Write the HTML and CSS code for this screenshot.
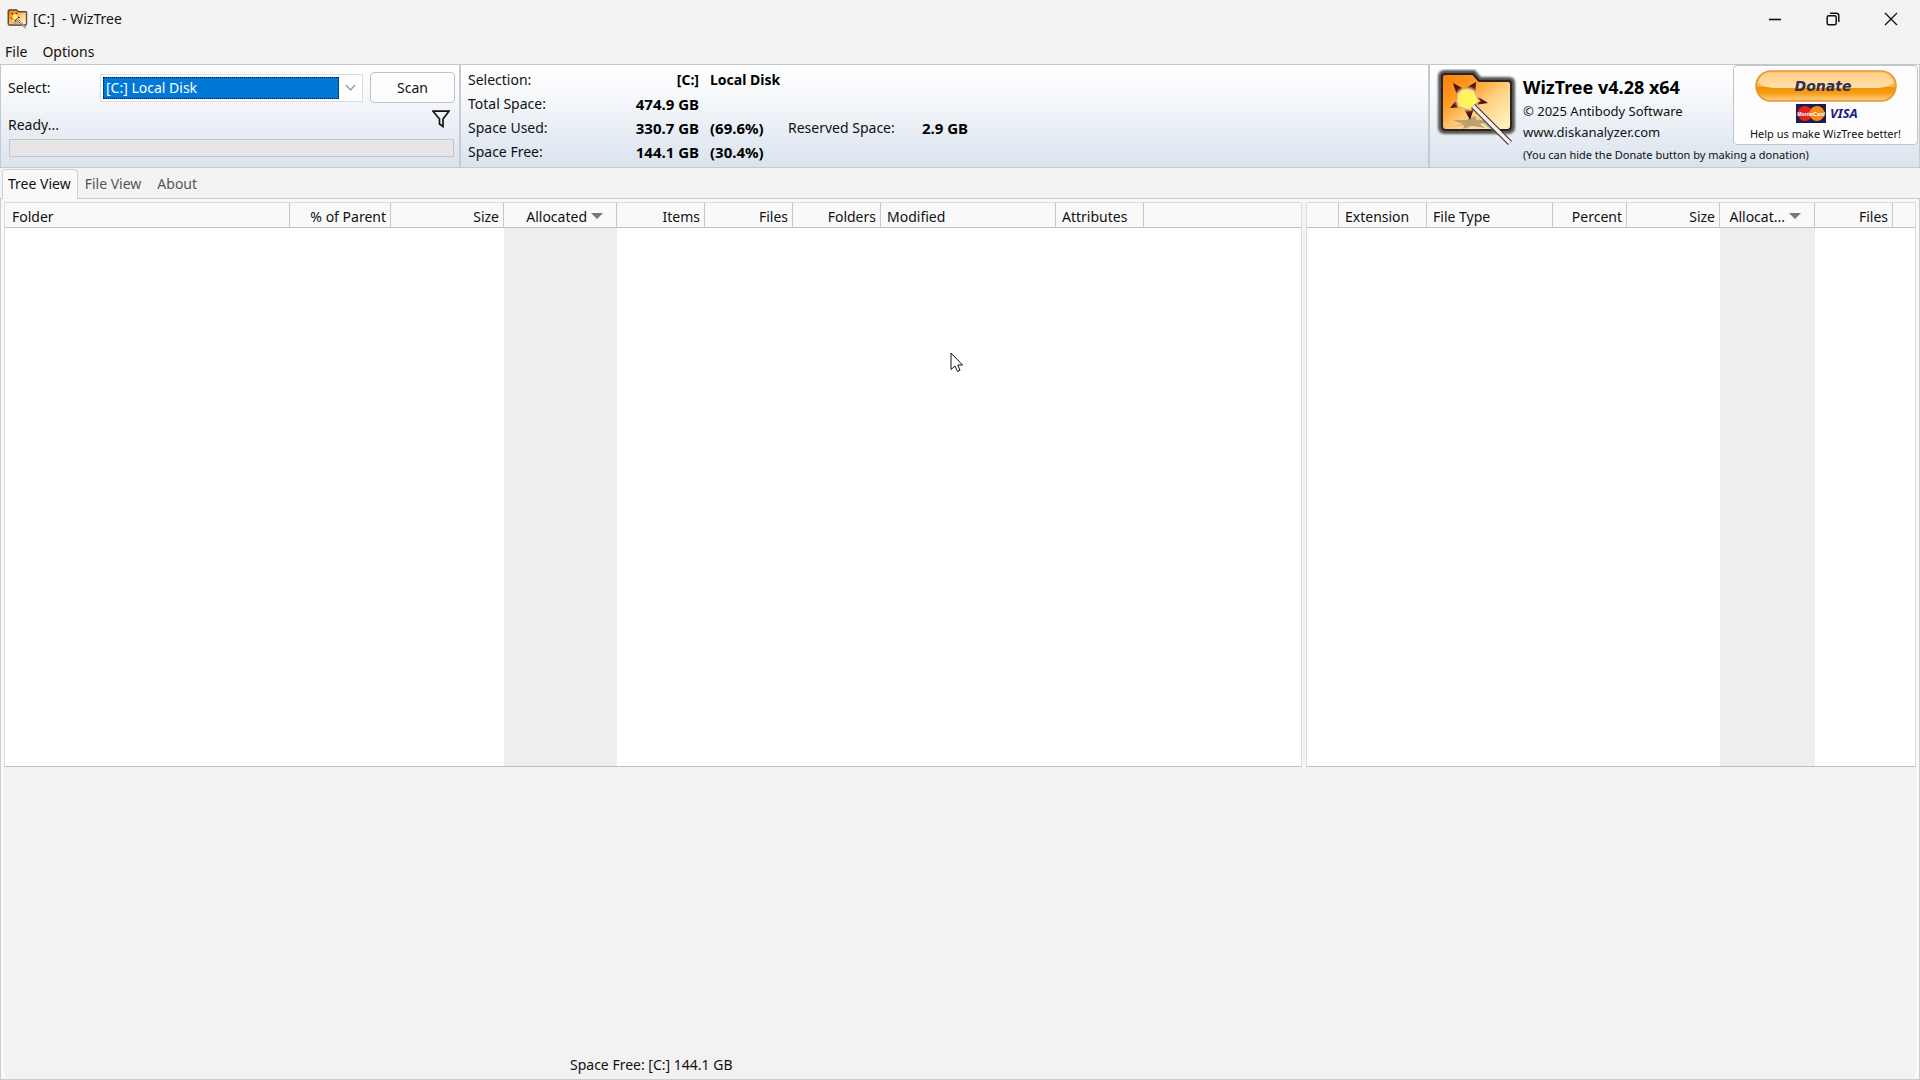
FILE: index.html
```html
<!DOCTYPE html>
<html lang="en">
<head>
<meta charset="utf-8">
<title>[C:] - WizTree</title>
<link rel="stylesheet" href="styles.css">
</head>
<body>
<svg class="defs" aria-hidden="true">
  <defs>
    <linearGradient id="folderFill" x1="0" y1="0" x2="1" y2="1">
      <stop offset="0" stop-color="#ff7d08"/><stop offset=".3" stop-color="#ff9a22"/>
      <stop offset=".58" stop-color="#ffd083"/><stop offset=".9" stop-color="#fff0bd"/>
    </linearGradient>
    <radialGradient id="starFill" gradientUnits="userSpaceOnUse" cx="31" cy="30" r="18">
      <stop offset="0" stop-color="#fff64a"/><stop offset=".5" stop-color="#fff080"/>
      <stop offset=".62" stop-color="#d09078"/><stop offset=".74" stop-color="#5c1c1c"/><stop offset="1" stop-color="#3a0c10"/>
    </radialGradient>
    <filter id="soft" x="-20%" y="-20%" width="140%" height="140%"><feGaussianBlur stdDeviation="1.3"/></filter>
    <linearGradient id="pill" x1="0" y1="0" x2="0" y2="1">
      <stop offset="0" stop-color="#ffc66c"/><stop offset=".54" stop-color="#ffb13c"/>
      <stop offset=".55" stop-color="#f39200"/><stop offset=".72" stop-color="#f69b10"/><stop offset="1" stop-color="#ffd28a"/>
    </linearGradient>
    <linearGradient id="shine" x1="0" y1="0" x2="0" y2="1">
      <stop offset="0" stop-color="#ffcf85"/><stop offset="1" stop-color="#ffe0ae"/>
    </linearGradient>
    <symbol id="folder" viewBox="0 0 82 78">
      <path d="M9 3H38L44 10H73Q77 10 77 14V58Q77 63 72 63H9Q4 63 4 58V8Q4 3 9 3Z" fill="#555" stroke="#555" stroke-width="4" filter="url(#soft)"/>
      <path d="M9 5H37L43 12H72Q75 12 75 15V57Q75 61 71 61H10Q6 61 6 57V8Q6 5 9 5Z" fill="url(#folderFill)" stroke="#2b2520" stroke-width="2"/>
      <path d="M15 58l12-3-10-4 13 0 9-4 2 4 12 1-9 3 5 4-13-2-9 3 1-4z" fill="#a08c62" opacity=".7"/>
      <path d="M40 48L55 57 70 71 58 64Z" fill="#777" opacity=".4"/>
      <path d="M17 14L28 20 40 13 39 26 52 34 39 36 34 51 27 38 14 39 22 29Z" fill="url(#starFill)"/>
      <path d="M26 19l5 6 7-4-1 7 8 4-8 3-2 7-6-6-8 2 4-7-4-7 6 2z" fill="#fff45a" opacity=".9"/>
      <path d="M37 37L74 74" stroke="#4a3030" stroke-width="5.600"/>
      <path d="M37 37L74 74" stroke="#f8f4f4" stroke-width="3.400"/>
    </symbol>
  </defs>
</svg>

<header class="titlebar">
  <svg class="app-icon"><use href="#folder"/></svg>
  <h1 class="title">[C:]&nbsp; - WizTree</h1>
  <div class="window-buttons">
    <button class="window-button" aria-label="Minimize"><svg width="14" height="14" viewBox="0 0 14 14"><path d="M1 7.5H13" stroke="#111" stroke-width="1.6"/></svg></button>
    <button class="window-button" aria-label="Restore"><svg width="14" height="14" viewBox="0 0 14 14" fill="none" stroke="#111" stroke-width="1.5"><rect x="1.2" y="3.7" width="9" height="9" rx="1.5"/><path d="M4 1.2H10.5Q12.8 1.2 12.8 3.5V10"/></svg></button>
    <button class="window-button" aria-label="Close"><svg width="14" height="14" viewBox="0 0 14 14"><path d="M1 1L13 13M13 1L1 13" stroke="#111" stroke-width="1.3"/></svg></button>
  </div>
</header>

<nav class="menubar">
  <button class="menu">File</button>
  <button class="menu">Options</button>
</nav>

<section class="toolbar">
  <form class="panel scan-panel">
    <div class="drive-row">
      <label class="drive-label" for="drive">Select:</label>
      <div class="combo">
        <select id="drive" class="combo-select"><option>[C:] Local Disk</option></select>
        <svg class="combo-arrow" width="23" height="12" viewBox="0 0 23 12"><path d="M7 3L11.500 8 16 3" fill="none" stroke="#999" stroke-width="1.4"/></svg>
      </div>
      <button class="scan" type="button">Scan</button>
    </div>
    <div class="status-row">
      <label for="scan-progress">Ready...</label>
      <button class="filter" type="button" aria-label="Filter"><svg width="18" height="18" viewBox="0 0 18 18"><path d="M1 1.200H17L11 9V16.500L7.500 14V9Z" fill="none" stroke="#111" stroke-width="1.700"/></svg></button>
    </div>
    <progress id="scan-progress" class="progress" value="0" max="100"></progress>
  </form>

  <div class="panel info-panel">
    <dl class="info">
      <dt>Selection:</dt><dd>[C:]</dd><dd class="left">Local Disk</dd>
      <dt>Total Space:</dt><dd class="figure">474.9 GB</dd>
      <dt>Space Used:</dt><dd class="figure">330.7 GB</dd><dd class="left figure">(69.6%)</dd><dt class="reserved">Reserved Space:</dt><dd class="figure">2.9 GB</dd>
      <dt>Space Free:</dt><dd class="figure">144.1 GB</dd><dd class="left figure">(30.4%)</dd>
    </dl>
  </div>

  <div class="panel about-panel">
    <svg class="logo"><use href="#folder"/></svg>
    <div class="about">
      <strong class="product">WizTree v4.28 x64</strong>
      <span class="credit">© 2025 Antibody Software</span>
      <a class="site" href="#">www.diskanalyzer.com</a>
      <small class="hint">(You can hide the Donate button by making a donation)</small>
    </div>
    <button class="donate">
      <svg width="142" height="54" viewBox="0 0 142 54">
        <rect x="1" y="1" width="140" height="30" rx="15" fill="url(#pill)" stroke="#e9943a" stroke-width="1.500"/>
        <path d="M15 3H127Q137 4 139 13Q132 18 120 18H22Q10 18 3 13Q5 4 15 3Z" fill="url(#shine)"/>
        <text class="donate-text" x="68" y="21" text-anchor="middle">Donate</text>
        <rect x="41" y="34" width="30" height="19" fill="#1d1c55"/>
        <circle cx="50" cy="43.500" r="7.500" fill="#e2231a"/><circle cx="62" cy="43.500" r="7.500" fill="#f58a1c"/>
        <text class="master-text" x="56" y="46" text-anchor="middle">MasterCard</text>
        <text class="visa-text" x="75" y="48">VISA</text>
      </svg>
      <span>Help us make WizTree better!</span>
    </button>
  </div>
</section>

<nav class="tabs" role="tablist">
  <button class="tab active" role="tab" aria-selected="true">Tree View</button>
  <button class="tab" role="tab">File View</button>
  <button class="tab" role="tab">About</button>
</nav>

<main class="workspace">
  <div class="lists">
    <div class="pane tree-pane">
      <table class="list">
        <colgroup><col class="w-folder"><col class="w-parent"><col class="w-treesize"><col class="w-alloc"><col class="w-count"><col class="w-count"><col class="w-count"><col class="w-modified"><col class="w-count"><col></colgroup>
        <thead><tr><th>Folder</th><th class="num">% of Parent</th><th class="num">Size</th><th class="num sort">Allocated<i class="arrow"></i></th><th class="num">Items</th><th class="num">Files</th><th class="num">Folders</th><th>Modified</th><th>Attributes</th><th></th></tr></thead>
        <tbody><tr><td></td><td></td><td></td><td class="sorted"></td><td></td><td></td><td></td><td></td><td></td><td></td></tr></tbody>
      </table>
    </div>
    <div class="pane types-pane">
      <table class="list">
        <colgroup><col class="w-icon"><col class="w-count"><col class="w-type"><col class="w-percent"><col class="w-size"><col class="w-typealloc"><col class="w-files"><col></colgroup>
        <thead><tr><th></th><th>Extension</th><th>File Type</th><th class="num">Percent</th><th class="num">Size</th><th class="num sort">Allocat...<i class="arrow"></i></th><th class="num">Files</th><th></th></tr></thead>
        <tbody><tr><td></td><td></td><td></td><td></td><td></td><td class="sorted"></td><td></td><td></td></tr></tbody>
      </table>
    </div>
  </div>
  <div class="treemap"><p class="free">Space Free: [C:] 144.1 GB</p></div>
</main>

<svg class="pointer" width="14" height="21" viewBox="0 0 14 21"><path d="M1 1V17.500L5 14 7.500 19.500 10 18.300 7.800 13H12.500Z" fill="#fff" stroke="#111" stroke-width="1"/></svg>
</body>
</html>
```
FILE: styles.css
```css
* { box-sizing: border-box; }

body {
  margin: 0;
  height: 100vh;
  display: flex;
  flex-direction: column;
  position: relative;
  overflow: hidden;
  background: #f3f3f3;
  color: #111;
  font: 14px/20px "Noto Sans", "Open Sans", sans-serif;
}

button, select {
  font: inherit;
  color: inherit;
  border: 0;
  background: none;
  padding: 0;
  margin: 0;
}

.defs { position: absolute; width: 0; height: 0; }

/* Title bar and menu */
.titlebar { display: flex; align-items: center; height: 38px; padding-left: 7px; }
.app-icon { width: 21px; height: 20px; }
.title { flex: 1; margin: 0 0 0 5px; font-size: 14px; font-weight: 400; }
.window-buttons { display: flex; }
.window-button { width: 58px; height: 38px; display: grid; place-items: center; }
.menubar { display: flex; gap: 15px; height: 26px; padding: 1px 0 0 5px; }

/* Toolbar */
.toolbar {
  display: flex;
  height: 104px;
  border-top: 1px solid #c6c8ca;
  border-bottom: 1px solid #c6c8ca;
  background: linear-gradient(#fff, #f8fafc 25%, #dae3ee);
}
.panel { border-right: 2px solid #c6cbd2; }
.scan-panel { width: 461px; padding: 7px 4px 0 7px; border-left: 1px solid #c6c8ca; }
.drive-row { display: flex; align-items: center; height: 31px; }
.drive-label { width: 92px; }
.combo {
  display: flex;
  align-items: center;
  width: 263px;
  height: 28px;
  margin-right: 7px;
  padding-left: 2px;
  border: 1px solid #d9dcdf;
  background: #fff;
}
.combo-select {
  flex: 1;
  height: 22px;
  padding-left: 2px;
  appearance: none;
  background: #0078d7;
  color: #fff;
  border: 1px dotted #111;
}
.scan { width: 85px; height: 31px; border: 1px solid #c0c3c7; border-radius: 4px; background: #fdfdfd; }
.status-row { display: flex; justify-content: space-between; height: 36px; padding: 12px 5px 0 0; }
.filter { height: 18px; margin-top: -5px; }
.filter svg, .donate svg { display: block; }
.progress {
  display: block;
  width: 445px;
  height: 18px;
  margin-left: 1px;
  appearance: none;
  border: 1px solid #c3c7cb;
  background: #e6e6e6;
}
.progress::-webkit-progress-bar { background: #e6e6e6; }

.info-panel { flex: 1; padding: 3px 0 0 7px; }
.info {
  display: grid;
  grid-template-columns: 142px 89px 89px 120px 60px;
  grid-auto-rows: 24px;
  line-height: 24px;
  margin: 0;
}
.info dt { grid-column: 1; white-space: nowrap; }
.info dd { margin: 0; text-align: right; font-weight: 700; color: #000; }
.info .left { text-align: left; padding-left: 11px; }
.info .figure { font-size: 15px; }
.info .reserved { grid-column: 4; }

.about-panel { display: flex; width: 490px; padding: 0 1px 0 6px; border-right-width: 1px; }
.logo { width: 82px; height: 78px; margin-top: 4px; }
.about { display: flex; flex-direction: column; flex: 1; width: 0; padding: 10px 0 0 5px; white-space: nowrap; }
.product { font-size: 18px; line-height: 24px; color: #000; }
.credit { font-size: 13px; line-height: 24px; }
.site { font-size: 13px; line-height: 18px; color: inherit; text-decoration: none; }
.hint { font-size: 11px; line-height: 28px; }
.donate {
  display: flex;
  flex-direction: column;
  align-items: center;
  width: 185px;
  height: 80px;
  padding-top: 4px;
  border: 1px solid #c0c3c7;
  border-radius: 4px;
  background: #fdfdfd;
  font-size: 11px;
  line-height: 20px;
}
.donate-text { font: italic 700 14px "DejaVu Sans", sans-serif; fill: #2c2e52; }
.master-text { font: italic 700 5px "Liberation Sans", sans-serif; fill: #fff; }
.visa-text { font: italic 700 13px "Noto Sans", sans-serif; fill: #1a1a8c; }

/* Tabs */
.tabs { display: flex; height: 31px; padding: 1px 0 0 2px; border-bottom: 1px solid #c6c8ca; }
.tab { height: 30px; padding: 0 9px 0 7px; color: #555; }
.tab.active {
  padding: 0 6px 1px 5px;
  border: 1px solid #d0d2d4;
  border-bottom: 0;
  border-radius: 4px 4px 0 0;
  background: #f9f9f9;
  color: #111;
}

/* Lists and treemap */
.workspace {
  flex: 1;
  min-height: 0;
  display: flex;
  flex-direction: column;
  border: solid #cdcdcd;
  border-width: 0 1px 1px;
  background: #f9f9f9;
  padding: 3px 3px 0;
}
.lists { flex: 565 1 0; min-height: 0; display: flex; gap: 4px; background: #f3f3f3; }
.pane { border: 1px solid #dcdcdc; border-bottom-color: #c0c0c0; background: #fff; }
.tree-pane { flex: 1; }
.types-pane { width: 610px; }
.list { width: 100%; height: 100%; table-layout: fixed; border-collapse: separate; border-spacing: 0; }
.list th {
  height: 25px;
  padding: 3px 4px 0;
  line-height: 21px;
  border-right: 1px solid #c8c8c8;
  border-bottom: 1px solid #c0c0c0;
  background: #f9f9f9;
  font-weight: 400;
  text-align: left;
  white-space: nowrap;
}
.list th:first-child { padding-left: 7px; }
.list th + th { padding-left: 6px; }
.list th:last-child { border-right: 0; }
.list .num { text-align: right; }
.list .sort { padding-right: 13px; }
.list td { padding: 0; }
.sorted { background: #eee; }
.arrow {
  display: inline-block;
  margin-left: 4px;
  vertical-align: 3px;
  border: solid transparent;
  border-width: 6px 6px 0;
  border-top-color: #777;
}
.w-folder { width: 285px; }
.w-parent { width: 101px; }
.w-treesize { width: 113px; }
.w-alloc { width: 113px; }
.w-count { width: 88px; }
.w-modified { width: 175px; }
.w-icon { width: 32px; }
.w-type { width: 126px; }
.w-percent { width: 74px; }
.w-size { width: 93px; }
.w-typealloc { width: 95px; }
.w-files { width: 78px; }

.treemap { flex: 312 1 0; display: flex; align-items: flex-end; background: #f2f2f2; }
.free { margin: 0; padding: 0 0 4px 566px; }

.pointer { position: absolute; left: 950px; top: 352px; }
```
